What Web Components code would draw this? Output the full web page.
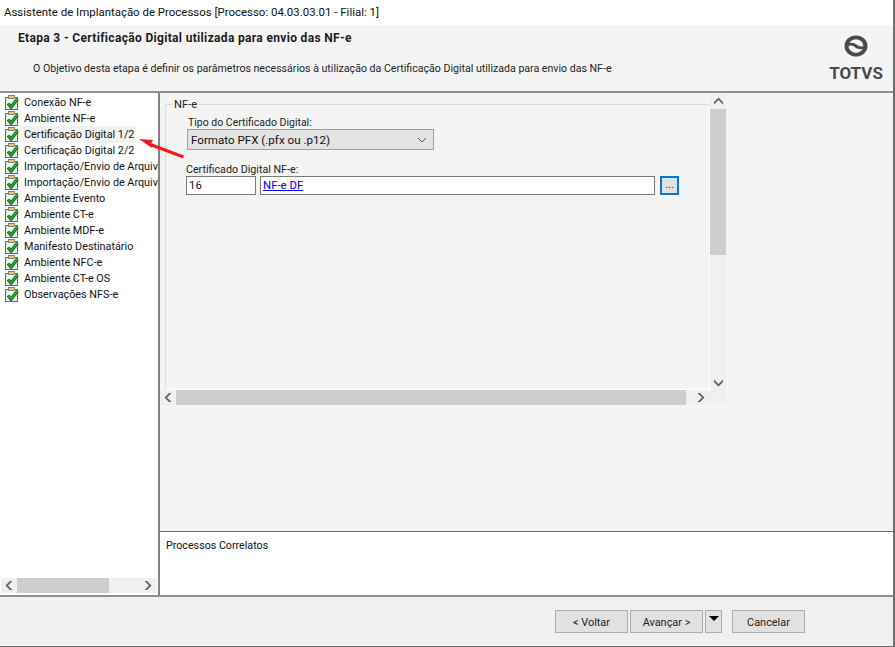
<!DOCTYPE html>
<html>
<head>
<meta charset="utf-8" />
<title>Assistente de Implantação de Processos</title>
<style>
    html, body { margin: 0; padding: 0; background: #fff; overflow: hidden; }
    body { font: 12px Roboto, "Liberation Sans", sans-serif; color: #000; }
</style>
</head>
<body>
<wizard-window>
    <wizard-header slot="header"
        title-text="Etapa 3 - Certificação Digital utilizada para envio das NF-e"
        description="O Objetivo desta etapa é definir os parâmetros necessários à utilização da Certificação Digital utilizada para envio das NF-e"></wizard-header>
    <step-list slot="steps">
        <step-item>Conexão NF-e</step-item>
        <step-item>Ambiente NF-e</step-item>
        <step-item selected>Certificação Digital 1/2</step-item>
        <step-item>Certificação Digital 2/2</step-item>
        <step-item>Importação/Envio de Arquivos</step-item>
        <step-item>Importação/Envio de Arquivos</step-item>
        <step-item>Ambiente Evento</step-item>
        <step-item>Ambiente CT-e</step-item>
        <step-item>Ambiente MDF-e</step-item>
        <step-item>Manifesto Destinatário</step-item>
        <step-item>Ambiente NFC-e</step-item>
        <step-item>Ambiente CT-e OS</step-item>
        <step-item>Observações NFS-e</step-item>
    </step-list>
    <cert-form slot="form"></cert-form>
    <span slot="related">Processos Correlatos</span>
    <wizard-button slot="buttons" style="margin-right:2px">&lt; Voltar</wizard-button>
    <wizard-button slot="buttons" style="margin-right:2px">Avançar &gt;</wizard-button>
    <wizard-button slot="buttons" narrow style="margin-right:10px"><svg width="10" height="5" viewBox="0 0 10 5"><path d="M0 0h10L5 5z" fill="#000"/></svg></wizard-button>
    <wizard-button slot="buttons">Cancelar</wizard-button>
</wizard-window>

<script>
const chevrons = {
    up: 'M1 6 5.5 1.5 10 6V8.5L5.5 4 1 8.5z',
    down: 'M1 2.5 5.5 7 10 2.5V5L5.5 9.5 1 5z',
    left: 'M6 1 1.5 5.5 6 10H8.5L4 5.5 8.5 1z',
    right: 'M3 1 7.5 5.5 3 10H.5L5 5.5 .5 1z'
};

function arrowIcon(dir) {
    return `<svg width="11" height="11" viewBox="0 0 11 11"><path d="${chevrons[dir]}" fill="#606060"/></svg>`;
}

customElements.define('wizard-window', class extends HTMLElement {
    constructor () {
        super();
        this.attachShadow({mode: 'open'});
        this.shadowRoot.innerHTML = `
            <style>
                :host {
                    display: flex;
                    flex-direction: column;
                    box-sizing: border-box;
                    width: 895px;
                    height: 647px;
                    position: relative;
                    border-right: 2px solid #6d6d6d;
                    border-bottom: 1px solid #6d6d6d;
                    background: #f0f0f0;
                    color: #000;
                }
                .caption {
                    height: 25px;
                    flex: none;
                    background: #fff;
                    padding: 3px 0 0 4px;
                    box-sizing: border-box;
                    font: 11.45px/18px Roboto, sans-serif;
                    color: #111;
                }
                .main {
                    flex: none;
                    height: 506px;
                    display: flex;
                    border-top: 2px solid #8f8f8f;
                    border-bottom: 2px solid #8f8f8f;
                    box-sizing: border-box;
                }
                .steps {
                    width: 158px;
                    flex: none;
                    background: #fff;
                    border-right: 2px solid #82828c;
                    display: flex;
                    flex-direction: column;
                    justify-content: space-between;
                }
                .right {
                    flex: 1;
                    display: flex;
                    flex-direction: column;
                    min-width: 0;
                    background: #f4f4f4;
                }
                .form { flex: 1; min-height: 0; }
                .related {
                    height: 64px;
                    flex: none;
                    box-sizing: border-box;
                    background: #fff;
                    border-top: 1px solid #6d6d6d;
                    padding: 6px 0 0 6px;
                    font: 10.7px/16px Roboto, sans-serif;
                    color: #111;
                }
                .footer {
                    flex: 1;
                    display: flex;
                    align-items: flex-start;
                    padding: 13px 0 0 555px;
                    background: #f0f0f0;
                }
                .arrow {
                    position: absolute;
                    left: 136px;
                    top: 134px;
                    pointer-events: none;
                }
            </style>
            <div class="caption">Assistente de Implantação de Processos [Processo: 04.03.03.01 - Filial: 1]</div>
            <slot name="header"></slot>
            <div class="main">
                <div class="steps">
                    <slot name="steps"></slot>
                    <h-scroll thumb="92" style="margin:0 1px 2px"></h-scroll>
                </div>
                <div class="right">
                    <div class="form"><slot name="form"></slot></div>
                    <div class="related"><slot name="related"></slot></div>
                </div>
            </div>
            <div class="footer"><slot name="buttons"></slot></div>
            <svg class="arrow" width="52" height="28" viewBox="0 0 52 28">
                <path d="M47.5 23 13 10" stroke="#ee1c1c" stroke-width="3" fill="none"/>
                <path d="M3 5 17 6 15 10 16 14z" fill="#ee1c1c"/>
            </svg>`;
    }
});

customElements.define('wizard-header', class extends HTMLElement {
    constructor () {
        super();
        this.attachShadow({mode: 'open'});
        this.shadowRoot.innerHTML = `
            <style>
                :host {
                    display: flex;
                    flex: none;
                    height: 66px;
                    box-sizing: border-box;
                    background: #f4f4f4;
                    justify-content: space-between;
                }
                .text { padding: 5px 0 0 17px; }
                h1 {
                    margin: 0 0 0 1px;
                    font: 700 12px/16px Roboto, sans-serif;
                    letter-spacing: .33px;
                    color: #1c1c1c;
                }
                p {
                    margin: 15px 0 0 16px;
                    font: 10.6px/16px Roboto, sans-serif;
                    color: #222;
                }
            </style>
            <div class="text">
                <h1>${this.getAttribute('title-text')}</h1>
                <p>${this.getAttribute('description')}</p>
            </div>
            <totvs-logo></totvs-logo>`;
    }
});

customElements.define('totvs-logo', class extends HTMLElement {
    constructor () {
        super();
        this.attachShadow({mode: 'open'});
        this.shadowRoot.innerHTML = `
            <style>
                :host {
                    display: flex;
                    flex-direction: column;
                    align-items: center;
                    width: 56px;
                    margin: 10px 9px 0 0;
                    color: #4a4a4a;
                }
                svg { display: block; }
                span {
                    font: 700 17px/20px Roboto, sans-serif;
                    margin-top: 6px;
                }
            </style>
            <svg width="24" height="22" viewBox="0 0 24 24" preserveAspectRatio="none">
                <circle cx="12" cy="12" r="9.5" fill="#f4f4f4" stroke="#4a4a4a" stroke-width="4"/>
                <path d="M4 9C8 7.5 12 9.5 14 11.5 16 13 18 12.5 20 12V15C16 16.5 12 14.5 10 12.5 8 11 6 11.5 4 12z" fill="#4a4a4a"/>
            </svg>
            <span>TOTVS</span>`;
    }
});

customElements.define('step-list', class extends HTMLElement {
    constructor () {
        super();
        this.attachShadow({mode: 'open'});
        this.shadowRoot.innerHTML = `
            <style>
                :host {
                    display: block;
                    padding: 1px 0 0 4px;
                    overflow: hidden;
                    white-space: nowrap;
                }
            </style>
            <slot></slot>`;
    }
});

customElements.define('step-item', class extends HTMLElement {
    constructor () {
        super();
        this.attachShadow({mode: 'open'});
        this.shadowRoot.innerHTML = `
            <style>
                :host {
                    display: flex;
                    align-items: center;
                    height: 16px;
                    font: 10.8px/16px Roboto, sans-serif;
                    color: #111;
                }
                svg { flex: none; margin-right: 3px; }
                .label { padding: 1px 2px 0 1px; }
                :host([selected]) .label { background: #f1f1f1; }
            </style>
            <svg width="16" height="16" viewBox="0 0 16 16">
                <path d="M1.5 3.5H13.5V15.5H1.5z" fill="#eef2f8" stroke="#5c6c86" shape-rendering="crispEdges"/>
                <path d="M4.5 1.5H10.5V4.5H4.5z" fill="#dccb8e" stroke="#8a845e" shape-rendering="crispEdges"/>
                <path d="M4 9.5 7 13 13.5 5" fill="none" stroke="#0f5f10" stroke-width="3.4"/>
                <path d="M4 9.5 7 13 13.5 5" fill="none" stroke="#2ea32a" stroke-width="2"/>
            </svg>
            <span class="label"><slot></slot></span>`;
    }
});

customElements.define('h-scroll', class extends HTMLElement {
    constructor () {
        super();
        this.attachShadow({mode: 'open'});
        const thumb = this.getAttribute('thumb');
        this.shadowRoot.innerHTML = `
            <style>
                :host { display: flex; flex: none; height: 15px; background: #f0f0f0; }
                .btn { flex: none; width: 16px; display: flex; align-items: center; justify-content: center; }
                .thumb { flex: none; background: #cdcdcd; width: ${thumb}px; }
                .track { flex: 1; }
            </style>
            <div class="btn">${arrowIcon('left')}</div>
            <div class="thumb"></div>
            <div class="track"></div>
            <div class="btn">${arrowIcon('right')}</div>`;
    }
});

customElements.define('v-scroll', class extends HTMLElement {
    constructor () {
        super();
        this.attachShadow({mode: 'open'});
        this.shadowRoot.innerHTML = `
            <style>
                :host { display: flex; flex-direction: column; flex: none; width: 16px; background: #f0f0f0; }
                .btn { flex: none; height: 16px; display: flex; align-items: center; justify-content: center; }
                .thumb { flex: none; height: 146px; background: #cdcdcd; }
                .track { flex: 1; }
            </style>
            <div class="btn">${arrowIcon('up')}</div>
            <div class="thumb"></div>
            <div class="track"></div>
            <div class="btn">${arrowIcon('down')}</div>`;
    }
});

customElements.define('cert-form', class extends HTMLElement {
    constructor () {
        super();
        this.attachShadow({mode: 'open'});
        this.shadowRoot.innerHTML = `
            <style>
                :host {
                    display: grid;
                    grid-template-columns: 550px 16px;
                    grid-template-rows: 297px 15px;
                    width: 566px;
                    font: 10.7px/14px Roboto, sans-serif;
                    color: #222;
                }
                .pane { padding: 11px 0 0 5px; box-sizing: border-box; overflow: hidden; }
                fieldset {
                    margin: 0;
                    padding: 0;
                    height: 286px;
                    box-sizing: border-box;
                    border: 0;
                    border-left: 1px solid #dcdcdc;
                    border-top: 1px solid #dcdcdc;
                    border-right: 1px solid #fff;
                    border-bottom: 1px solid #fff;
                    display: flex;
                    flex-direction: column;
                }
                .legend {
                    width: max-content;
                    margin: -7px 0 0 7px;
                    padding: 0 1px;
                    background: #f4f4f4;
                    font-size: 11.2px;
                }
                .tipo { margin: 4px 0 0 22px; font-size: 10.5px; }
                .combo {
                    display: flex;
                    align-items: center;
                    justify-content: space-between;
                    box-sizing: border-box;
                    width: 247px;
                    height: 21px;
                    margin: -1px 0 0 21px;
                    padding: 0 6px 0 3px;
                    background: #e3e3e3;
                    border: 1px solid #a0a0a0;
                    color: #111;
                    font-size: 11.6px;
                }
                .cert { margin: 13px 0 0 20px; }
                .row { display: flex; margin: -1px 0 0 20px; height: 19px; }
                .field {
                    box-sizing: border-box;
                    height: 19px;
                    background: #fff;
                    border: 1px solid #7a7a7a;
                    padding: 1px 0 0 2px;
                    color: #111;
                    font-size: 11.4px;
                    line-height: 15px;
                }
                .code { width: 70px; margin-right: 4px; }
                .name { width: 395px; margin-right: 5px; }
                a { color: #0000ee; text-decoration: underline; }
                .dots {
                    box-sizing: border-box;
                    width: 19px;
                    height: 19px;
                    border: 2px solid #0078d7;
                    background: #e1e1e1;
                    text-align: center;
                    font: 11px/13px Roboto, sans-serif;
                    color: #333;
                }
                .corner { background: #f0f0f0; }
            </style>
            <div class="pane">
                <fieldset>
                    <div class="legend">NF-e</div>
                    <div class="tipo">Tipo do Certificado Digital:</div>
                    <div class="combo"><span>Formato PFX (.pfx ou .p12)</span>
                        <svg width="10" height="6" viewBox="0 0 10 6"><path d="M1 1 5 5 9 1" fill="none" stroke="#555" stroke-width="1"/></svg>
                    </div>
                    <div class="cert">Certificado Digital NF-e:</div>
                    <div class="row">
                        <div class="field code">16</div>
                        <div class="field name"><a>NF-e DF</a></div>
                        <div class="dots">...</div>
                    </div>
                </fieldset>
            </div>
            <v-scroll></v-scroll>
            <h-scroll thumb="510"></h-scroll>
            <div class="corner"></div>`;
    }
});

customElements.define('wizard-button', class extends HTMLElement {
    constructor () {
        super();
        this.attachShadow({mode: 'open'});
        this.shadowRoot.innerHTML = `
            <style>
                :host {
                    display: flex;
                    align-items: center;
                    justify-content: center;
                    box-sizing: border-box;
                    width: 73px;
                    height: 23px;
                    padding-top: 2px;
                    background: #e1e1e1;
                    border: 1px solid #adadad;
                    font: 10.9px/16px Roboto, sans-serif;
                    color: #222;
                }
                :host([narrow]) { width: 17px; align-items: flex-start; padding-top: 5px; }
            </style>
            <slot></slot>`;
    }
});
</script>
</body>
</html>
